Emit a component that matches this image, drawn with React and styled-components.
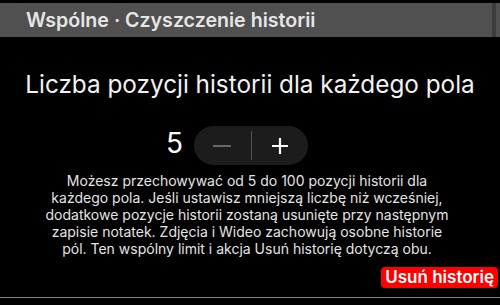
import styled, { createGlobalStyle } from "styled-components";

const GlobalStyle = createGlobalStyle`
  html, body {
    margin: 0;
    padding: 0;
    background: #000;
  }
  body {
    font-family: Inter, "Noto Sans", "Liberation Sans", sans-serif;
    -webkit-font-smoothing: antialiased;
  }
`;

const Screen = styled.div`
  width: 500px;
  height: 305px;
  background: #000;
  overflow: hidden;
  display: flex;
  flex-direction: column;
`;

const TitleBar = styled.div`
  margin-top: 3px;
  height: 34px;
  display: flex;
  background: #505050;
`;

const TitleMain = styled.div`
  flex: 1;
  display: flex;
  align-items: center;
  padding-left: 26px;
  color: #e6e6e6;
  font-size: 19.6px;
  font-weight: 600;
`;

const TitleEdge = styled.div`
  width: 4px;
  background: #3c3c3c;
  margin-right: 4px;
`;

const Heading = styled.h1`
  margin: 32px 0 0;
  text-align: center;
  color: #f2f2f2;
  font-size: 24.3px;
  font-weight: 400;
  line-height: 30px;
`;

const StepperRow = styled.div`
  margin-top: 27px;
  display: flex;
  justify-content: center;
  align-items: center;
  gap: 11px;
  padding-right: 26px;
`;

const Value = styled.span`
  color: #fff;
  font-size: 28px;
  line-height: 30px;
  margin-bottom: 6px;
`;

const Pill = styled.div`
  width: 114px;
  height: 39px;
  border-radius: 20px;
  background: #1c1c1c;
  display: flex;
  align-items: center;
`;

const StepButton = styled.button`
  flex: 1;
  height: 100%;
  border: none;
  background: transparent;
  padding: 0;
  display: flex;
  align-items: center;
  justify-content: center;
  color: ${(p) => (p.$disabled ? "#666" : "#fff")};
  cursor: pointer;
`;

const Divider = styled.div`
  width: 1px;
  height: 29px;
  background: #555;
`;

const Info = styled.p`
  margin: 7px 0 0;
  text-align: center;
  color: #e4e4e4;
  font-size: 14px;
  line-height: 17px;
  white-space: nowrap;
  padding-right: 6px;
`;

const Footer = styled.div`
  margin-top: 10px;
  display: flex;
  justify-content: flex-end;
  padding-right: 2px;
`;

const DangerButton = styled.button`
  height: 21px;
  padding: 0 4px;
  border: none;
  border-radius: 4px;
  background: #ff0000;
  color: #fff;
  font-family: inherit;
  font-size: 17px;
  font-weight: 600;
  line-height: 21px;
  cursor: pointer;
`;

const BottomRule = styled.div`
  margin-top: 9px;
  height: 1px;
  background: #808080;
`;

function Minus() {
  return (
    <svg width="20" height="20" viewBox="0 0 20 20">
      <path d="M1 10h18" stroke="currentColor" strokeWidth="2" />
    </svg>
  );
}

function Plus() {
  return (
    <svg width="18" height="18" viewBox="0 0 18 18">
      <path d="M1 9h16M9 1v16" stroke="currentColor" strokeWidth="2.2" />
    </svg>
  );
}

export default function App() {
  return (
    <>
      <GlobalStyle />
      <Screen>
        <TitleBar>
          <TitleMain>Wspólne · Czyszczenie historii</TitleMain>
          <TitleEdge />
        </TitleBar>
        <Heading>Liczba pozycji historii dla każdego pola</Heading>
        <StepperRow>
          <Value>5</Value>
          <Pill>
            <StepButton $disabled aria-label="Zmniejsz">
              <Minus />
            </StepButton>
            <Divider />
            <StepButton aria-label="Zwiększ">
              <Plus />
            </StepButton>
          </Pill>
        </StepperRow>
        <Info>
          Możesz przechowywać od 5 do 100 pozycji historii dla
          <br />
          każdego pola. Jeśli ustawisz mniejszą liczbę niż wcześniej,
          <br />
          dodatkowe pozycje historii zostaną usunięte przy następnym
          <br />
          zapisie notatek. Zdjęcia i Wideo zachowują osobne historie
          <br />
          pól. Ten wspólny limit i akcja Usuń historię dotyczą obu.
        </Info>
        <Footer>
          <DangerButton>Usuń historię</DangerButton>
        </Footer>
        <BottomRule />
      </Screen>
    </>
  );
}
